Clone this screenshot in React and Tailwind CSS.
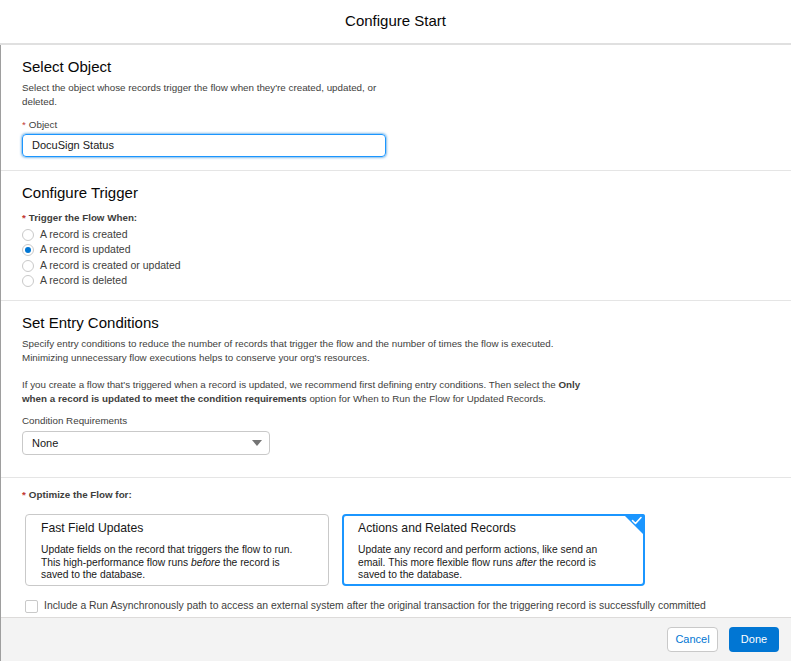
import React from 'react';

const Req = () => <span className="text-[#c23934] mr-[3px]">*</span>;

const Radio = ({ checked, label }) => (
  <label className="flex items-center h-[15.5px] text-[10.5px]">
    <span className="w-[12px] h-[12px] rounded-full border border-[#c9c9c9] bg-white flex items-center justify-center">
      {checked && <span className="w-[6px] h-[6px] rounded-full bg-[#0176d3]" />}
    </span>
    <span className="ml-[6px] text-[#3e3e3c]">{label}</span>
  </label>
);

const Card = ({ title, children, selected }) => (
  <div
    className={
      'relative h-[72px] rounded-[4px] bg-white pr-[10px] ' +
      (selected ? 'w-[303px] border-2 border-[#1b96ff] pt-[4px] pl-[14px]' : 'w-[304px] border border-[#c9c9c9] pt-[5px] pl-[15px]')
    }
  >
    {selected && (
      <svg className="absolute -top-[2px] -right-[2px]" width="24" height="24" viewBox="0 0 24 24">
        <path d="M2 0 H22 A2 2 0 0 1 24 2 V22 Z" fill="#1b96ff" />
        <path d="M11.5 6.5 L14.5 9.5 L20 3.5" stroke="#fff" strokeWidth="1.6" fill="none" strokeLinecap="round" strokeLinejoin="round" />
      </svg>
    )}
    <div className="text-[12.2px] leading-[16px] text-[#181818]">{title}</div>
    <div className="mt-[8px] text-[10.3px] leading-[12.5px] text-[#181818]">{children}</div>
  </div>
);

export default function App() {
  return (
    <div className="w-[791px] h-[661px] bg-white flex flex-col overflow-hidden font-['Liberation_Sans',Arial,sans-serif] text-[#181818] text-[9.8px]">
      {/* Header */}
      <div className="h-[45px] shrink-0 border-b-2 border-[#e0e0e0] flex items-center justify-center">
        <h1 className="text-[15px] text-[#080707]">Configure Start</h1>
      </div>

      <div className="flex-1 border-l border-[#9e9e9e] flex flex-col">
        {/* Select Object */}
        <section className="h-[126px] px-[21px] pt-[12px] border-b border-[#e5e5e5]">
          <h2 className="text-[15px] leading-[20px] text-[#080707]">Select Object</h2>
          <p className="mt-[4px] w-[372px] leading-[14px] text-[#3e3e3c]">
            Select the object whose records trigger the flow when they're created, updated, or deleted.
          </p>
          <div className="mt-[9px] leading-[14px] text-[#3e3e3c]">
            <Req />Object
          </div>
          <div className="mt-[2px] w-[364px] h-[23px] rounded-[4px] border border-[#1b96ff] shadow-[0_0_3px_#0176d3] flex items-center pl-[9px] text-[11px] text-[#181818]">
            DocuSign Status
          </div>
        </section>

        {/* Configure Trigger */}
        <section className="h-[130px] px-[21px] pt-[12px] border-b border-[#e5e5e5]">
          <h2 className="text-[15px] leading-[20px] text-[#080707]">Configure Trigger</h2>
          <div className="mt-[8px] leading-[14px] font-bold text-[#3e3e3c]">
            <Req />Trigger the Flow When:
          </div>
          <div className="mt-[2px] flex flex-col">
            <Radio label="A record is created" />
            <Radio checked label="A record is updated" />
            <Radio label="A record is created or updated" />
            <Radio label="A record is deleted" />
          </div>
        </section>

        {/* Set Entry Conditions */}
        <section className="h-[177px] px-[21px] pt-[12px] border-b border-[#e5e5e5]">
          <h2 className="text-[15px] leading-[20px] text-[#080707]">Set Entry Conditions</h2>
          <p className="mt-[4px] leading-[14px] text-[#3e3e3c]">
            Specify entry conditions to reduce the number of records that trigger the flow and the number of times the flow is executed.
            <br />
            Minimizing unnecessary flow executions helps to conserve your org's resources.
          </p>
          <p className="mt-[13px] leading-[14px] text-[#3e3e3c]">
            If you create a flow that's triggered when a record is updated, we recommend first defining entry conditions. Then select the <b>Only</b>
            <br />
            <b>when a record is updated to meet the condition requirements</b> option for When to Run the Flow for Updated Records.
          </p>
          <div className="mt-[8px] leading-[14px] text-[#3e3e3c]">Condition Requirements</div>
          <div className="mt-[3px] w-[248px] h-[24px] rounded-[4px] border border-[#c9c9c9] flex items-center justify-between pl-[9px] pr-[7px] text-[11px] text-[#181818]">
            <span>None</span>
            <svg width="10" height="6" viewBox="0 0 10 6">
              <path d="M0 0 H10 L5 6 Z" fill="#747474" />
            </svg>
          </div>
        </section>

        {/* Optimize */}
        <section className="flex-1 px-[21px] pt-[10px]">
          <div className="leading-[14px] font-bold text-[#3e3e3c]">
            <Req />Optimize the Flow for:
          </div>
          <div className="mt-[12px] ml-[3px] flex gap-[13px]">
            <Card title="Fast Field Updates">
              Update fields on the record that triggers the flow to run.
              <br />
              This high-performance flow runs <i>before</i> the record is
              <br />
              saved to the database.
            </Card>
            <Card selected title="Actions and Related Records">
              Update any record and perform actions, like send an
              <br />
              email. This more flexible flow runs <i>after</i> the record is
              <br />
              saved to the database.
            </Card>
          </div>
          <label className="mt-[13px] ml-[3px] flex items-center h-[14px] text-[10.4px]">
            <span className="w-[13px] h-[13px] rounded-[2px] border border-[#c9c9c9] bg-white" />
            <span className="ml-[6px] text-[#3e3e3c]">
              Include a Run Asynchronously path to access an external system after the original transaction for the triggering record is successfully committed
            </span>
          </label>
        </section>

        {/* Footer */}
        <footer className="h-[44px] shrink-0 border-t border-[#dddbda] bg-[#f3f3f3] flex items-center justify-end gap-[11px] pr-[12px]">
          <button className="h-[25px] w-[51px] rounded-[4px] border border-[#c9c9c9] bg-white text-[#0176d3] text-[11px]">
            Cancel
          </button>
          <button className="h-[25px] w-[50px] rounded-[4px] bg-[#0176d3] text-white text-[11px]">Done</button>
        </footer>
      </div>
    </div>
  );
}
